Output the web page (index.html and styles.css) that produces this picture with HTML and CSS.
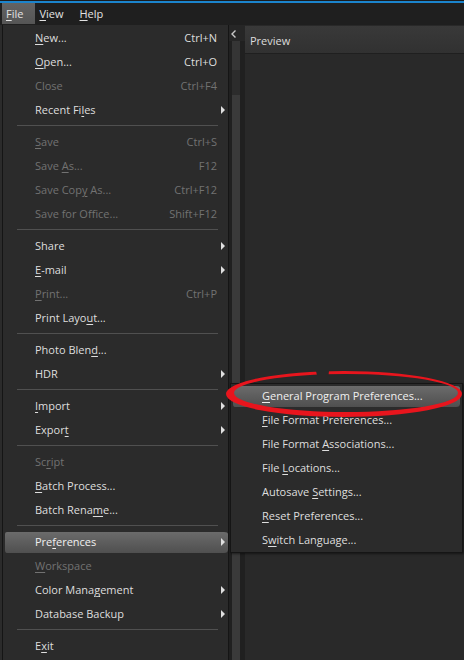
FILE: index.html
```html
<!DOCTYPE html>
<html>
<head>
<meta charset="utf-8">
<title>File menu</title>
<link rel="stylesheet" href="styles.css">
</head>
<body>
<div class="app">
  <div class="topline"></div>
  <div class="menubar">
    <span class="mb-item open"><u>F</u>ile</span>
    <span class="mb-item"><u>V</u>iew</span>
    <span class="mb-item"><u>H</u>elp</span>
  </div>
  <div class="workspace">
    <div class="left-pane"></div>
    <div class="dock-strip">
      <div class="collapse">
        <svg width="8" height="10" viewBox="0 0 8 10"><polyline points="5.5,1.5 2,5 5.5,8.5" fill="none" stroke="#c8c8c8" stroke-width="1.4"/></svg>
      </div>
      <div class="track">
        <div class="seg seg-a"></div>
        <div class="seg seg-b"></div>
        <div class="seg seg-c"></div>
      </div>
    </div>
    <div class="preview">
      <div class="preview-head">Preview</div>
      <div class="preview-body"></div>
    </div>
  </div>

  <div class="menu file-menu">
    <div class="mi"><span class="lbl"><u>N</u>ew...</span><span class="sc">Ctrl+N</span><span class="arr"></span></div>
    <div class="mi"><span class="lbl"><u>O</u>pen...</span><span class="sc">Ctrl+O</span><span class="arr"></span></div>
    <div class="mi off"><span class="lbl">Close</span><span class="sc">Ctrl+F4</span><span class="arr"></span></div>
    <div class="mi"><span class="lbl">Recent Fi<u>l</u>es</span><span class="sc"></span><span class="arr sub"></span></div>
    <div class="sep"></div>
    <div class="mi off"><span class="lbl"><u>S</u>ave</span><span class="sc">Ctrl+S</span><span class="arr"></span></div>
    <div class="mi off"><span class="lbl">Save <u>A</u>s...</span><span class="sc">F12</span><span class="arr"></span></div>
    <div class="mi off"><span class="lbl">Save Cop<u>y</u> As...</span><span class="sc">Ctrl+F12</span><span class="arr"></span></div>
    <div class="mi off"><span class="lbl">Save for Office...</span><span class="sc">Shift+F12</span><span class="arr"></span></div>
    <div class="sep"></div>
    <div class="mi"><span class="lbl">Share</span><span class="sc"></span><span class="arr sub"></span></div>
    <div class="mi"><span class="lbl"><u>E</u>-mail</span><span class="sc"></span><span class="arr sub"></span></div>
    <div class="mi off"><span class="lbl"><u>P</u>rint...</span><span class="sc">Ctrl+P</span><span class="arr"></span></div>
    <div class="mi"><span class="lbl">Print Layo<u>u</u>t...</span><span class="sc"></span><span class="arr"></span></div>
    <div class="sep"></div>
    <div class="mi"><span class="lbl">Photo Blen<u>d</u>...</span><span class="sc"></span><span class="arr"></span></div>
    <div class="mi"><span class="lbl">HDR</span><span class="sc"></span><span class="arr sub"></span></div>
    <div class="sep"></div>
    <div class="mi"><span class="lbl"><u>I</u>mport</span><span class="sc"></span><span class="arr sub"></span></div>
    <div class="mi"><span class="lbl">Expor<u>t</u></span><span class="sc"></span><span class="arr sub"></span></div>
    <div class="sep"></div>
    <div class="mi off"><span class="lbl">Sc<u>r</u>ipt</span><span class="sc"></span><span class="arr"></span></div>
    <div class="mi"><span class="lbl"><u>B</u>atch Process...</span><span class="sc"></span><span class="arr"></span></div>
    <div class="mi"><span class="lbl">Batch Rena<u>m</u>e...</span><span class="sc"></span><span class="arr"></span></div>
    <div class="sep"></div>
    <div class="mi active"><span class="lbl">Pre<u>f</u>erences</span><span class="sc"></span><span class="arr sub"></span></div>
    <div class="mi off"><span class="lbl"><u>W</u>orkspace</span><span class="sc"></span><span class="arr"></span></div>
    <div class="mi"><span class="lbl">Color Mana<u>g</u>ement</span><span class="sc"></span><span class="arr sub"></span></div>
    <div class="mi"><span class="lbl">Database Backup</span><span class="sc"></span><span class="arr sub"></span></div>
    <div class="sep"></div>
    <div class="mi"><span class="lbl">E<u>x</u>it</span><span class="sc"></span><span class="arr"></span></div>
  </div>

  <div class="menu submenu">
    <div class="mi active"><span class="lbl"><u>G</u>eneral Program Preferences...</span></div>
    <div class="mi"><span class="lbl"><u>F</u>ile Format Preferences...</span></div>
    <div class="mi"><span class="lbl">File Format <u>A</u>ssociations...</span></div>
    <div class="mi"><span class="lbl">File <u>L</u>ocations...</span></div>
    <div class="mi"><span class="lbl">Autosave <u>S</u>ettings...</span></div>
    <div class="mi"><span class="lbl"><u>R</u>eset Preferences...</span></div>
    <div class="mi"><span class="lbl">S<u>w</u>itch Language...</span></div>
  </div>

  <svg class="annot" width="464" height="660" viewBox="0 0 464 660">
    <defs>
      <mask id="gap">
        <rect x="0" y="0" width="464" height="660" fill="#fff"/>
        <path d="M314 362 L330 362 L328 380 L318 380 Z" fill="#000"/>
      </mask>
    </defs>
    <path mask="url(#gap)" fill="#e8151d" fill-rule="evenodd"
      d="M226 394 A118 23 0 1 0 462 394 A118 23 0 1 0 226 394 Z
         M234 393 A112 19 0 1 0 458 393 A112 19 0 1 0 234 393 Z"/>
  </svg>
</div>
</body>
</html>
```
FILE: styles.css
```css
* { box-sizing: border-box; }

html, body {
  margin: 0;
  padding: 0;
  background: #1c1c1c;
}

body {
  width: 464px;
  height: 660px;
  overflow: hidden;
  font-family: "Open Sans", "Noto Sans", sans-serif;
  font-size: 11px;
  color: #dedede;
}

.app {
  position: relative;
  width: 464px;
  height: 660px;
  display: flex;
  flex-direction: column;
}

u {
  text-decoration: underline;
  text-underline-offset: 2px;
  text-decoration-thickness: 1px;
}

.topline {
  margin-top: 1px;
  height: 2px;
  background: #1b84cc;
}

.menubar {
  height: 22px;
  display: flex;
  align-items: flex-start;
  padding-left: 2px;
  background: #1f1f1f;
}

.mb-item {
  height: 21px;
  line-height: 21px;
  padding: 0 12px 0 4px;
  color: #e2e2e2;
}

.mb-item.open {
  background: linear-gradient(#636363, #555555);
}

.workspace {
  flex: 1;
  display: flex;
  min-height: 0;
}

.left-pane {
  width: 229px;
  background: #2b2b2b;
}

.dock-strip {
  width: 16px;
  display: flex;
  flex-direction: column;
  background: #202020;
}

.collapse {
  height: 16px;
  padding: 4px 0 0 1px;
  background: #262626;
  display: flex;
  align-items: flex-start;
}

.track {
  flex: 1;
  margin: 0 5px 0 3px;
  display: flex;
  flex-direction: column;
  background: #393939;
}

.seg-a { height: 29px; background: #353535; }
.seg-b { height: 25px; background: #2c2c2c; }
.seg-c { flex: 1; background: #3a3a3a; }

.preview {
  flex: 1;
  display: flex;
  flex-direction: column;
  background: #292929;
}

.preview-head {
  margin-top: 1px;
  height: 28px;
  line-height: 30px;
  padding-left: 5px;
  background: linear-gradient(#393939, #313131);
  border-bottom: 1px solid #1f1f1f;
  color: #dcdcdc;
}

.preview-body {
  flex: 1;
  background: #292929;
}

/* menus */
.menu {
  position: absolute;
  background: #2b2b2b;
  border: 1px solid #151515;
  display: flex;
  flex-direction: column;
}

.file-menu {
  left: 2px;
  top: 25px;
  width: 227px;
  height: 645px;
  border-top: 0;
  padding-top: 1px;
}

.submenu {
  left: 230px;
  top: 383px;
  width: 233px;
  box-shadow: 1px 1px 2px rgba(0, 0, 0, 0.5);
}

.mi {
  height: 24px;
  display: flex;
  align-items: center;
  border-style: solid;
  border-color: transparent;
  border-width: 2px 0 1px 2px;
  background-clip: padding-box;
  padding-left: 30px;
  padding-bottom: 2px;
  white-space: nowrap;
  color: #dedede;
}

.submenu .mi {
  padding-left: 29px;
  margin-right: 2px;
}

.mi.off { color: #727272; }

.mi.active {
  background: linear-gradient(#6b6b6b, #4f4f4f);
  background-clip: padding-box;
  border-radius: 4px;
  color: #f0f0f0;
}

.lbl { flex: 1; }

.sc { text-align: right; }

.arr {
  width: 11px;
  height: 19px;
  flex: none;
  display: flex;
  align-items: center;
  padding-left: 4px;
}

.arr.sub::before {
  content: "";
  display: block;
  width: 0;
  height: 0;
  border-left: 4px solid #e0e0e0;
  border-top: 4px solid transparent;
  border-bottom: 4px solid transparent;
}

.sep {
  height: 8px;
  padding: 3px 10px 0 14px;
}

.sep::before {
  content: "";
  display: block;
  height: 1px;
  background: #505050;
}

.annot {
  position: absolute;
  left: 0;
  top: 0;
  pointer-events: none;
}
```
